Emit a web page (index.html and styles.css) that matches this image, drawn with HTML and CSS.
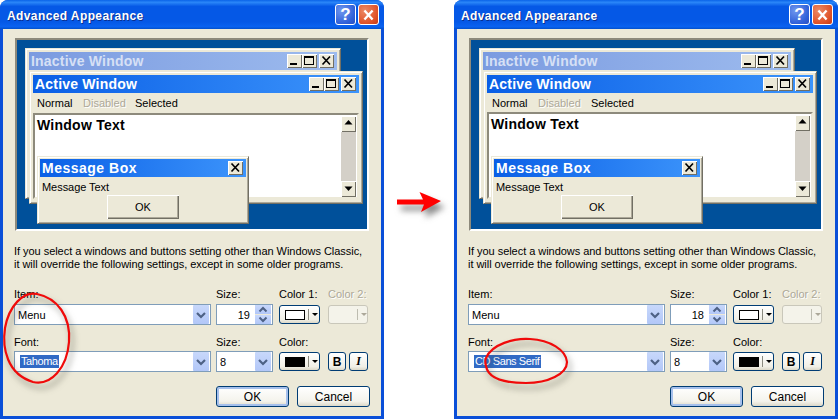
FILE: index.html
```html
<!DOCTYPE html>
<html lang="en">
<head>
<meta charset="utf-8">
<title>Advanced Appearance</title>
<link rel="stylesheet" href="styles.css">
</head>
<body>
<svg class="defs" width="0" height="0" aria-hidden="true">
  <symbol id="i-min" viewBox="0 0 15 14"><rect x="3" y="9" width="7" height="2" fill="#000"/></symbol>
  <symbol id="i-max" viewBox="0 0 15 14"><path d="M2 2h10v9H2z M3 4v6h8V4z" fill="#000" fill-rule="evenodd"/></symbol>
  <symbol id="i-close" viewBox="0 0 15 14"><path d="M3.5 2.5l7.5 8M11 2.5l-7.5 8" stroke="#000" stroke-width="1.7" fill="none"/></symbol>
  <symbol id="i-up" viewBox="0 0 15 14"><path d="M7.5 4l4 4.5h-8z" fill="#000"/></symbol>
  <symbol id="i-down" viewBox="0 0 15 14"><path d="M7.5 10l4-4.5h-8z" fill="#000"/></symbol>
  <symbol id="i-chev" viewBox="0 0 16 18"><path d="M4 7l4 4 4-4" stroke="#4d6185" stroke-width="2.2" fill="none"/></symbol>
  <symbol id="i-help-x" viewBox="0 0 21 20"><path d="M6 5l9 10M15 5l-9 10" stroke="#fff" stroke-width="2.6" fill="none"/></symbol>
</svg>

<main class="stage">
  <section class="xp-window">
    <header class="xp-title">
      <h1 class="xp-title-text">Advanced Appearance</h1>
      <span class="xp-cap xp-cap-help">?</span>
      <span class="xp-cap xp-cap-close"><svg width="21" height="20"><use href="#i-help-x"/></svg></span>
    </header>
    <div class="xp-client">
      <div class="preview">
        <div class="cw cw-inactive">
          <div class="cw-title cw-title-inactive">
            <span class="cw-title-text">Inactive Window</span>
            <span class="cw-btn"><svg width="15" height="14"><use href="#i-min"/></svg></span>
            <span class="cw-btn"><svg width="15" height="14"><use href="#i-max"/></svg></span>
            <span class="cw-btn cw-btn-gap"><svg width="15" height="14"><use href="#i-close"/></svg></span>
          </div>
        </div>
        <div class="cw cw-active">
          <div class="cw-title">
            <span class="cw-title-text">Active Window</span>
            <span class="cw-btn"><svg width="15" height="14"><use href="#i-min"/></svg></span>
            <span class="cw-btn"><svg width="15" height="14"><use href="#i-max"/></svg></span>
            <span class="cw-btn cw-btn-gap"><svg width="15" height="14"><use href="#i-close"/></svg></span>
          </div>
          <div class="cw-menu">
            <span class="menu-normal">Normal</span>
            <span class="menu-disabled">Disabled</span>
            <span class="menu-selected">Selected</span>
          </div>
          <div class="cw-body">
            <div class="cw-text">Window Text</div>
            <div class="sb">
              <span class="cw-btn sb-btn"><svg width="15" height="14"><use href="#i-up"/></svg></span>
              <span class="sb-track"></span>
              <span class="cw-btn sb-btn"><svg width="15" height="14"><use href="#i-down"/></svg></span>
            </div>
          </div>
        </div>
        <div class="cw cw-msg">
          <div class="cw-title">
            <span class="cw-title-text">Message Box</span>
            <span class="cw-btn"><svg width="15" height="14"><use href="#i-close"/></svg></span>
          </div>
          <div class="msg-text">Message Text</div>
          <div class="msg-ok">OK</div>
        </div>
      </div>
      <p class="note">If you select a windows and buttons setting other than Windows Classic,<br>it will override the following settings, except in some older programs.</p>
      <div class="form">
        <label class="lbl">Item:</label>
        <label class="lbl">Size:</label>
        <label class="lbl">Color 1:</label>
        <label class="lbl lbl-off">Color 2:</label>

        <div class="field field-wide"><span class="field-val">Menu</span><span class="drop"><svg width="16" height="18"><use href="#i-chev"/></svg></span></div>
        <div class="field field-size"><span class="field-num">19</span><span class="spin"><span class="spin-part"><svg width="16" height="9" viewBox="0 0 16 9"><path d="M4.5 6.5l3.5-3.5 3.5 3.5" stroke="#4d6185" stroke-width="2" fill="none"/></svg></span><span class="spin-part"><svg width="16" height="9" viewBox="0 0 16 9"><path d="M4.5 2.5l3.5 3.5 3.5-3.5" stroke="#4d6185" stroke-width="2" fill="none"/></svg></span></span></div>
        <div class="colorbtn"><span class="swatch swatch-white"></span><span class="split"></span><span class="tri"></span></div>
        <div class="colorbtn colorbtn-off"><span class="swatch swatch-off"></span><span class="split"></span><span class="tri"></span></div>

        <label class="lbl lbl-low">Font:</label>
        <label class="lbl lbl-low">Size:</label>
        <label class="lbl lbl-low">Color:</label>
        <span></span>

        <div class="field field-wide"><span class="field-sel">Tahoma</span><span class="drop"><svg width="16" height="18"><use href="#i-chev"/></svg></span></div>
        <div class="field field-size"><span class="field-val">8</span><span class="drop"><svg width="16" height="18"><use href="#i-chev"/></svg></span></div>
        <div class="colorbtn"><span class="swatch swatch-black"></span><span class="split"></span><span class="tri"></span></div>
        <div class="styles"><span class="stylebtn stylebtn-b">B</span><span class="stylebtn stylebtn-i">I</span></div>
      </div>
      <div class="actions">
        <span class="btn btn-default">OK</span>
        <span class="btn">Cancel</span>
      </div>
    </div>
    <svg class="ring ring-a" viewBox="0 0 72 96" width="72" height="96"><path d="M36 4C22 1 8 16 4 38C1 58 6 84 32 92C50 96 66 78 68 52C70 26 56 8 36 4Z" fill="none" stroke="#f00a0a" stroke-width="2.2"/></svg>
  </section>

  <div class="arrow-slot">
    <svg class="arrow" width="52" height="30" viewBox="0 0 52 30"><path d="M2 8.5h26L24.500 1 46 10 26 21l3-7.500H2z" fill="#f00"/></svg>
  </div>

  <section class="xp-window xp-window-alt">
    <header class="xp-title">
      <h1 class="xp-title-text">Advanced Appearance</h1>
      <span class="xp-cap xp-cap-help">?</span>
      <span class="xp-cap xp-cap-close"><svg width="21" height="20"><use href="#i-help-x"/></svg></span>
    </header>
    <div class="xp-client">
      <div class="preview">
        <div class="cw cw-inactive">
          <div class="cw-title cw-title-inactive">
            <span class="cw-title-text">Inactive Window</span>
            <span class="cw-btn"><svg width="15" height="14"><use href="#i-min"/></svg></span>
            <span class="cw-btn"><svg width="15" height="14"><use href="#i-max"/></svg></span>
            <span class="cw-btn cw-btn-gap"><svg width="15" height="14"><use href="#i-close"/></svg></span>
          </div>
        </div>
        <div class="cw cw-active">
          <div class="cw-title">
            <span class="cw-title-text">Active Window</span>
            <span class="cw-btn"><svg width="15" height="14"><use href="#i-min"/></svg></span>
            <span class="cw-btn"><svg width="15" height="14"><use href="#i-max"/></svg></span>
            <span class="cw-btn cw-btn-gap"><svg width="15" height="14"><use href="#i-close"/></svg></span>
          </div>
          <div class="cw-menu">
            <span class="menu-normal">Normal</span>
            <span class="menu-disabled">Disabled</span>
            <span class="menu-selected">Selected</span>
          </div>
          <div class="cw-body">
            <div class="cw-text">Window Text</div>
            <div class="sb">
              <span class="cw-btn sb-btn"><svg width="15" height="14"><use href="#i-up"/></svg></span>
              <span class="sb-track"></span>
              <span class="cw-btn sb-btn"><svg width="15" height="14"><use href="#i-down"/></svg></span>
            </div>
          </div>
        </div>
        <div class="cw cw-msg">
          <div class="cw-title">
            <span class="cw-title-text">Message Box</span>
            <span class="cw-btn"><svg width="15" height="14"><use href="#i-close"/></svg></span>
          </div>
          <div class="msg-text">Message Text</div>
          <div class="msg-ok">OK</div>
        </div>
      </div>
      <p class="note">If you select a windows and buttons setting other than Windows Classic,<br>it will override the following settings, except in some older programs.</p>
      <div class="form">
        <label class="lbl">Item:</label>
        <label class="lbl">Size:</label>
        <label class="lbl">Color 1:</label>
        <label class="lbl lbl-off">Color 2:</label>

        <div class="field field-wide"><span class="field-val">Menu</span><span class="drop"><svg width="16" height="18"><use href="#i-chev"/></svg></span></div>
        <div class="field field-size"><span class="field-num">18</span><span class="spin"><span class="spin-part"><svg width="16" height="9" viewBox="0 0 16 9"><path d="M4.5 6.5l3.5-3.5 3.5 3.5" stroke="#4d6185" stroke-width="2" fill="none"/></svg></span><span class="spin-part"><svg width="16" height="9" viewBox="0 0 16 9"><path d="M4.5 2.5l3.5 3.5 3.5-3.5" stroke="#4d6185" stroke-width="2" fill="none"/></svg></span></span></div>
        <div class="colorbtn"><span class="swatch swatch-white"></span><span class="split"></span><span class="tri"></span></div>
        <div class="colorbtn colorbtn-off"><span class="swatch swatch-off"></span><span class="split"></span><span class="tri"></span></div>

        <label class="lbl lbl-low">Font:</label>
        <label class="lbl lbl-low">Size:</label>
        <label class="lbl lbl-low">Color:</label>
        <span></span>

        <div class="field field-wide"><span class="field-sel">CD Sans Serif</span><span class="drop"><svg width="16" height="18"><use href="#i-chev"/></svg></span></div>
        <div class="field field-size"><span class="field-val">8</span><span class="drop"><svg width="16" height="18"><use href="#i-chev"/></svg></span></div>
        <div class="colorbtn"><span class="swatch swatch-black"></span><span class="split"></span><span class="tri"></span></div>
        <div class="styles"><span class="stylebtn stylebtn-b">B</span><span class="stylebtn stylebtn-i">I</span></div>
      </div>
      <div class="actions">
        <span class="btn btn-default">OK</span>
        <span class="btn">Cancel</span>
      </div>
    </div>
    <svg class="ring ring-b" viewBox="0 0 90 52" width="90" height="52"><path d="M4 22C10 8 32 2 48 3C68 4 84 14 85 26C85 38 66 47 44 47C22 47 6 42 4 30C3 26 3 24 4 22Z" fill="none" stroke="#f00a0a" stroke-width="2.2"/></svg>
  </section>
</main>
</body>
</html>
```

FILE: styles.css
```css
* { box-sizing: border-box; }
html, body { margin: 0; padding: 0; background: #fff; }
body { width: 838px; height: 419px; overflow: hidden; font-family: "Liberation Sans", "DejaVu Sans", sans-serif; font-size: 11px; color: #000; }
.defs { position: absolute; }

.stage { display: flex; width: 838px; height: 419px; }
.arrow-slot { width: 70px; padding: 191px 0 0 11px; }
.arrow { display: block; filter: drop-shadow(4px 6px 3px rgba(60,60,60,.6)); overflow: visible; }

.xp-window { position: relative; width: 384px; height: 419px; display: flex; flex-direction: column; background: #0a4fd8; border-radius: 8px 8px 0 0; padding: 0 3px 3px; }
.xp-title { height: 29px; margin: 0 -3px; padding: 2px 5px 0 7px; display: flex; align-items: center; gap: 2px; border-radius: 8px 8px 0 0; background: linear-gradient(#0a63e8 0%, #2a86f8 8%, #0558e6 22%, #0558e6 75%, #0a62f0 92%, #0350cc 100%); }
.xp-title-text { flex: 1; margin: 0; font: bold 12px "Liberation Sans", sans-serif; color: #fff; text-shadow: 1px 1px 0 #0a2f90; letter-spacing: .4px; }
.xp-cap { width: 21px; height: 21px; margin-top: -2px; border: 1px solid #fff; border-radius: 3px; display: flex; align-items: center; justify-content: center; font: bold 17px "Liberation Sans", sans-serif; color: #fff; }
.xp-cap-help { background: radial-gradient(circle at 30% 30%, #6f97ee, #2f5fd8 70%, #2a4fc0); }
.xp-cap-close { background: radial-gradient(circle at 30% 30%, #ec8a66, #e0542a 65%, #c73a14); }

.xp-client { flex: 1; background: #ece9d8; padding: 9px 11px 0 12px; display: flex; flex-direction: column; }

.preview { position: relative; width: 354px; height: 193px; background: #00509a; border: 2px solid; border-color: #8d8a7c #fff #fff #8d8a7c; flex: none; }

.cw { position: absolute; background: #ece9d8; border: 1px solid; border-color: #ece9d8 #716f64 #716f64 #ece9d8; box-shadow: inset 1px 1px 0 #fff, inset -1px -1px 0 #aca899; padding: 3px; }
.cw-inactive { left: 8px; top: 8px; width: 316px; height: 151px; }
.cw-active { left: 12px; top: 31px; width: 334px; height: 133px; display: flex; flex-direction: column; }
.cw-msg { left: 20px; top: 116px; width: 212px; height: 68px; padding: 2px; }

.cw-title { height: 18px; display: flex; align-items: center; gap: 0; padding: 0 3px 0 2px; background: linear-gradient(90deg, #0a5fe6, #3c94fb); color: #fff; flex: none; }
.cw-title-inactive { background: linear-gradient(90deg, #7b9be0, #9dbbee); color: #d6e0f5; }
.cw-title-text { flex: 1; font: bold 14px "Liberation Sans", sans-serif; letter-spacing: .2px; }
.cw-msg .cw-title-text { letter-spacing: .5px; }
.cw-btn { width: 15px; height: 14px; display: block; background: #ece9d8; border: 0; box-shadow: inset 1px 1px 0 #fff, inset -1px -1px 0 #716f64; flex: none; }
.cw-btn svg { display: block; }
.cw-btn-gap { margin-left: 2px; }

.cw-menu { height: 20px; display: flex; align-items: center; padding-left: 4px; flex: none; }
.menu-normal { width: 46px; }
.menu-disabled { width: 52px; color: #aca899; text-shadow: 1px 1px 0 #fff; }
.cw-body { flex: 1; display: flex; justify-content: space-between; width: 326px; background: #fff; border: 2px solid; border-color: #8d8a7c #ece9d8 #ece9d8 #8d8a7c; margin-bottom: 1px; }
.cw-text { padding: 2px 0 0 2px; font: bold 14px "Liberation Sans", sans-serif; letter-spacing: .25px; }
.sb { width: 17px; display: flex; flex-direction: column; padding: 1px 1px 0 1px; }
.sb-btn { width: 15px; height: 16px; }
.sb-track { flex: 1; background: #d4d0c8; }

.msg-text { padding: 4px 0 0 2px; height: 18px; letter-spacing: -.05px; }
.msg-ok { width: 72px; height: 24px; margin-left: 67px; display: flex; align-items: center; justify-content: center; background: #ece9d8; box-shadow: inset 1px 1px 0 #fff, inset -1px -1px 0 #716f64, inset -2px -2px 0 #aca899; }

.note { margin: 14px 0 16px -1px; height: 26px; line-height: 13px; white-space: nowrap; letter-spacing: -.04px; flex: none; }

.form { display: grid; grid-template-columns: 202px 63px 49px 41px; grid-template-rows: 17px 21px 26px 21px; margin-left: -1px; flex: none; }
.lbl { line-height: 14px; }
.lbl-off { color: #aca899; text-shadow: 1px 1px 0 #fff; }
.lbl-low { align-self: end; padding-bottom: 2px; }

.field { height: 21px; background: #fff; border: 1px solid #7f9db9; display: flex; align-items: center; position: relative; padding: 1px; }
.field-wide { width: 197px; }
.field-size { width: 57px; }
.field-val { flex: 1; padding-left: 2px; }
.field-num { flex: 1; text-align: right; padding-right: 5px; }
.field-sel { margin-left: 4px; padding: 0 1px; background: #316ac5; color: #fff; line-height: 13px; letter-spacing: -.4px; }
.field-wide .field-sel + .drop { margin-left: auto; }
.drop { width: 16px; height: 19px; background: linear-gradient(#c8d8fb, #b2c7f8); display: block; border-radius: 1px; flex: none; }
.drop svg { display: block; margin-top: 1px; }
.spin { width: 16px; height: 19px; display: flex; flex-direction: column; gap: 1px; background: #ece9d8; flex: none; }
.spin-part { height: 9px; background: linear-gradient(#c8d8fb, #b2c7f8); display: block; }
.spin-part svg { display: block; }

.colorbtn { width: 41px; height: 19px; margin-top: 1px; border: 1px solid #003c74; border-radius: 3px; background: linear-gradient(#fff, #f0efe6 80%, #dcd8c8); display: flex; align-items: center; padding-left: 5px; }
.swatch { width: 20px; height: 10px; display: block; flex: none; }
.swatch-white { background: #fff; border: 1px solid #000; }
.swatch-black { background: #000; }
.swatch-off { background: transparent; }
.split { width: 1px; height: 11px; background: #8a8a80; margin-left: 3px; }
.tri { margin-left: 3px; width: 0; height: 0; border: 3px solid transparent; border-top: 3px solid #000; border-bottom: 0; }
.colorbtn-off { width: 40px; border-color: #c9c7ba; background: #f4f3ea; }
.colorbtn-off .split { background: #bdbcb0; margin-left: 3px; }
.colorbtn-off .tri { border-top-color: #aca899; }

.styles { display: flex; gap: 3px; margin-top: 1px; }
.stylebtn { width: 18px; height: 19px; border: 1px solid #003c74; border-radius: 3px; background: linear-gradient(#fff, #f0efe6 80%, #dcd8c8); display: flex; align-items: center; justify-content: center; font: bold 12px "Liberation Sans", sans-serif; }
.stylebtn-i { width: 19px; font-family: "Liberation Serif", serif; font-style: italic; }

.actions { display: flex; justify-content: flex-end; gap: 8px; margin-top: 14px; flex: none; }
.btn { width: 73px; height: 21px; border: 1px solid #003c74; border-radius: 3px; background: linear-gradient(#fff, #f4f3ec 75%, #dcd8c8); display: flex; align-items: center; justify-content: center; font-size: 12px; }
.btn-default { box-shadow: inset 0 0 0 2px #a6c0ec; }

.ring { position: absolute; filter: drop-shadow(3px 5px 3px rgba(60,60,50,.55)); overflow: visible; }
.ring-a { left: 1px; top: 290px; }
.ring-b { left: 28px; top: 336px; }

.xp-window-alt .cw-menu { height: 19px; padding-left: 5px; }
.xp-window-alt .menu-disabled { width: 53px; }
```
